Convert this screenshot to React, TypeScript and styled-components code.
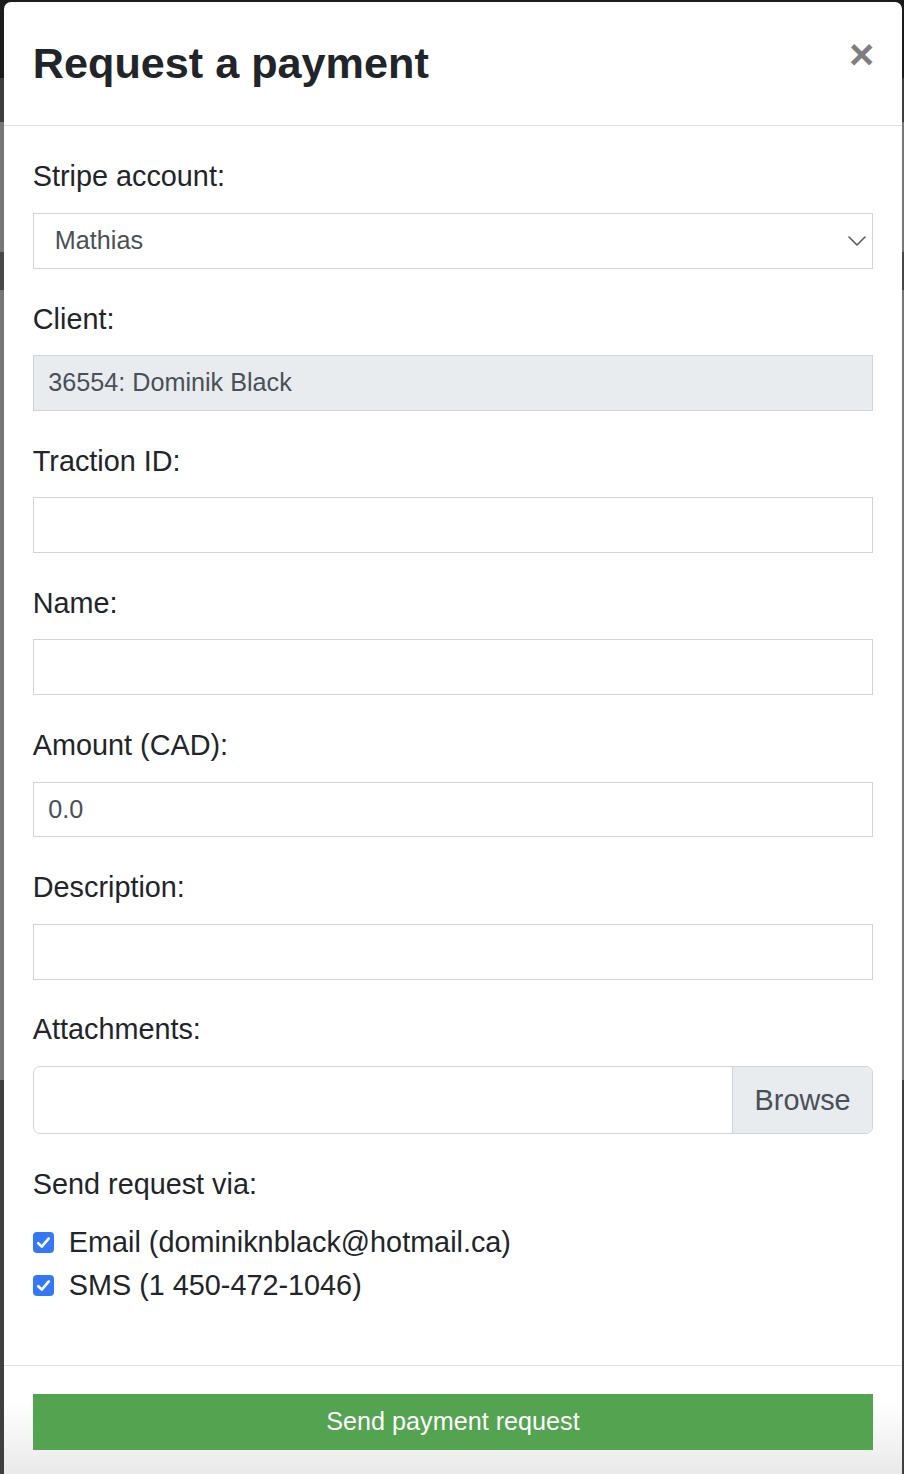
import React from "react";
import styled, { createGlobalStyle } from "styled-components";

const GlobalStyle = createGlobalStyle`
  html, body {
    margin: 0;
    padding: 0;
    overflow: hidden;
    height: 1474px;
  }
  body {
    font-family: "Liberation Sans", Arial, Helvetica, sans-serif;
    background: linear-gradient(
      to bottom,
      #1b1b1b 0px, #1b1b1b 78px,
      #3e3e3e 78px, #3e3e3e 122px,
      #777777 122px, #777777 252px,
      #474747 252px, #474747 290px,
      #777777 290px, #777777 1080px,
      #3f3f3f 1080px, #3f3f3f 1474px
    );
  }
  * { box-sizing: border-box; }
`;

const Modal = styled.div`
  margin: 2px 2px 0 4px;
  width: 898px;
  background: #fff;
  border-radius: 7px 7px 0 0;
  color: #212529;
`;

const Header = styled.div`
  display: flex;
  align-items: flex-start;
  justify-content: space-between;
  padding: 36px 28.8px 35px 28.8px;
  border-bottom: 1px solid #dee2e6;
`;

const Title = styled.h4`
  margin: 0;
  font-size: 43.2px;
  font-weight: 700;
  line-height: 1.2;
  color: #212529;
`;

const Close = styled.button`
  background: transparent;
  border: 0;
  padding: 0;
  margin: -5px -1px 0 auto;
  font-family: "Liberation Sans", Arial, sans-serif;
  font-size: 43.2px;
  font-weight: 700;
  line-height: 1;
  color: #000;
  opacity: 0.5;
  cursor: pointer;
`;

const Body = styled.div`
  display: flow-root;
  padding: 29.5px 28.8px 28.8px 28.8px;
`;

const FormGroup = styled.div`
  margin-bottom: 28.8px;
`;

const Label = styled.label`
  display: block;
  margin-bottom: 14.4px;
  font-size: 28.8px;
  line-height: 1.5;
  color: #212529;
`;

const Input = styled.input<{ $disabled?: boolean }>`
  display: block;
  width: 100%;
  height: 55.8px;
  padding: 7.2px 14.4px;
  font-family: "Liberation Sans", Arial, sans-serif;
  font-size: 25.2px;
  line-height: 1.5;
  color: #495057;
  background: ${(p) => (p.$disabled ? "#e9ecef" : "#fff")};
  border: 1px solid #ced4da;
  border-radius: 0;
  outline: none;
`;

const SelectWrap = styled.div`
  position: relative;
`;

const Select = styled.select`
  display: block;
  width: 100%;
  height: 55.8px;
  padding: 7.2px 40px 7.2px 21px;
  font-family: "Liberation Sans", Arial, sans-serif;
  font-size: 25.2px;
  line-height: 1.5;
  color: #495057;
  background: #fff;
  border: 1px solid #ced4da;
  border-radius: 0;
  appearance: none;
  -webkit-appearance: none;
  outline: none;
`;

const Chevron = styled.svg`
  position: absolute;
  right: 7px;
  top: 23px;
  width: 18px;
  height: 10px;
  pointer-events: none;
`;

const FileBox = styled.div`
  display: flex;
  height: 68.4px;
  border: 1px solid #ced4da;
  border-radius: 7px;
  overflow: hidden;
  background: #fff;
`;

const FileField = styled.div`
  flex: 1;
`;

const Browse = styled.div`
  display: flex;
  align-items: center;
  padding: 0 21.6px;
  background: #e9ecef;
  border-left: 1px solid #ced4da;
  font-size: 28.8px;
  line-height: 1.5;
  color: #495057;
`;

const Check = styled.label`
  display: flex;
  align-items: center;
  font-size: 28.8px;
  line-height: 1.5;
  color: #212529;
`;

const Box = styled.span`
  width: 21px;
  height: 21px;
  margin-right: 15px;
  border-radius: 4px;
  background: #3478f6;
  display: flex;
  align-items: center;
  justify-content: center;
  flex-shrink: 0;
`;

const Footer = styled.div`
  border-top: 1px solid #dee2e6;
  padding: 21.6px 21.6px 40px 21.6px;
  background: linear-gradient(to bottom, #ffffff 0px, #ffffff 36px, #e9e9e9 109px);
`;

const SubmitButton = styled.button`
  display: block;
  width: calc(100% - 14.4px);
  margin: 7.2px;
  height: 55.8px;
  padding: 7.2px 14.4px;
  background: #53a351;
  color: #fff;
  border: 0;
  border-radius: 0;
  font-family: "Liberation Sans", Arial, sans-serif;
  font-size: 25.2px;
  line-height: 1.5;
  cursor: pointer;
`;

const CheckMark = () => (
  <svg width="15" height="13" viewBox="0 0 15 13">
    <path
      d="M2.2 7.2 L5.8 10.6 L12.8 2.4"
      fill="none"
      stroke="#fff"
      strokeWidth="2.6"
      strokeLinecap="round"
      strokeLinejoin="round"
    />
  </svg>
);

export default function App() {
  return (
    <>
      <GlobalStyle />
      <Modal>
        <Header>
          <Title>Request a payment</Title>
          <Close aria-label="Close">×</Close>
        </Header>
        <Body>
          <FormGroup>
            <Label>Stripe account:</Label>
            <SelectWrap>
              <Select defaultValue="Mathias">
                <option>Mathias</option>
              </Select>
              <Chevron viewBox="0 0 18 10">
                <path
                  d="M1 1 L9 9 L17 1"
                  fill="none"
                  stroke="#555a60"
                  strokeWidth="1.6"
                  strokeLinecap="round"
                  strokeLinejoin="round"
                />
              </Chevron>
            </SelectWrap>
          </FormGroup>
          <FormGroup>
            <Label>Client:</Label>
            <Input $disabled readOnly value="36554: Dominik Black" />
          </FormGroup>
          <FormGroup>
            <Label>Traction ID:</Label>
            <Input />
          </FormGroup>
          <FormGroup>
            <Label>Name:</Label>
            <Input />
          </FormGroup>
          <FormGroup>
            <Label>Amount (CAD):</Label>
            <Input defaultValue="0.0" />
          </FormGroup>
          <FormGroup>
            <Label>Description:</Label>
            <Input />
          </FormGroup>
          <FormGroup>
            <Label>Attachments:</Label>
            <FileBox>
              <FileField />
              <Browse>Browse</Browse>
            </FileBox>
          </FormGroup>
          <FormGroup>
            <Label>Send request via:</Label>
            <Check>
              <Box>
                <CheckMark />
              </Box>
              Email (dominiknblack@hotmail.ca)
            </Check>
            <Check>
              <Box>
                <CheckMark />
              </Box>
              SMS (1 450-472-1046)
            </Check>
          </FormGroup>
        </Body>
        <Footer>
          <SubmitButton>Send payment request</SubmitButton>
        </Footer>
      </Modal>
    </>
  );
}
